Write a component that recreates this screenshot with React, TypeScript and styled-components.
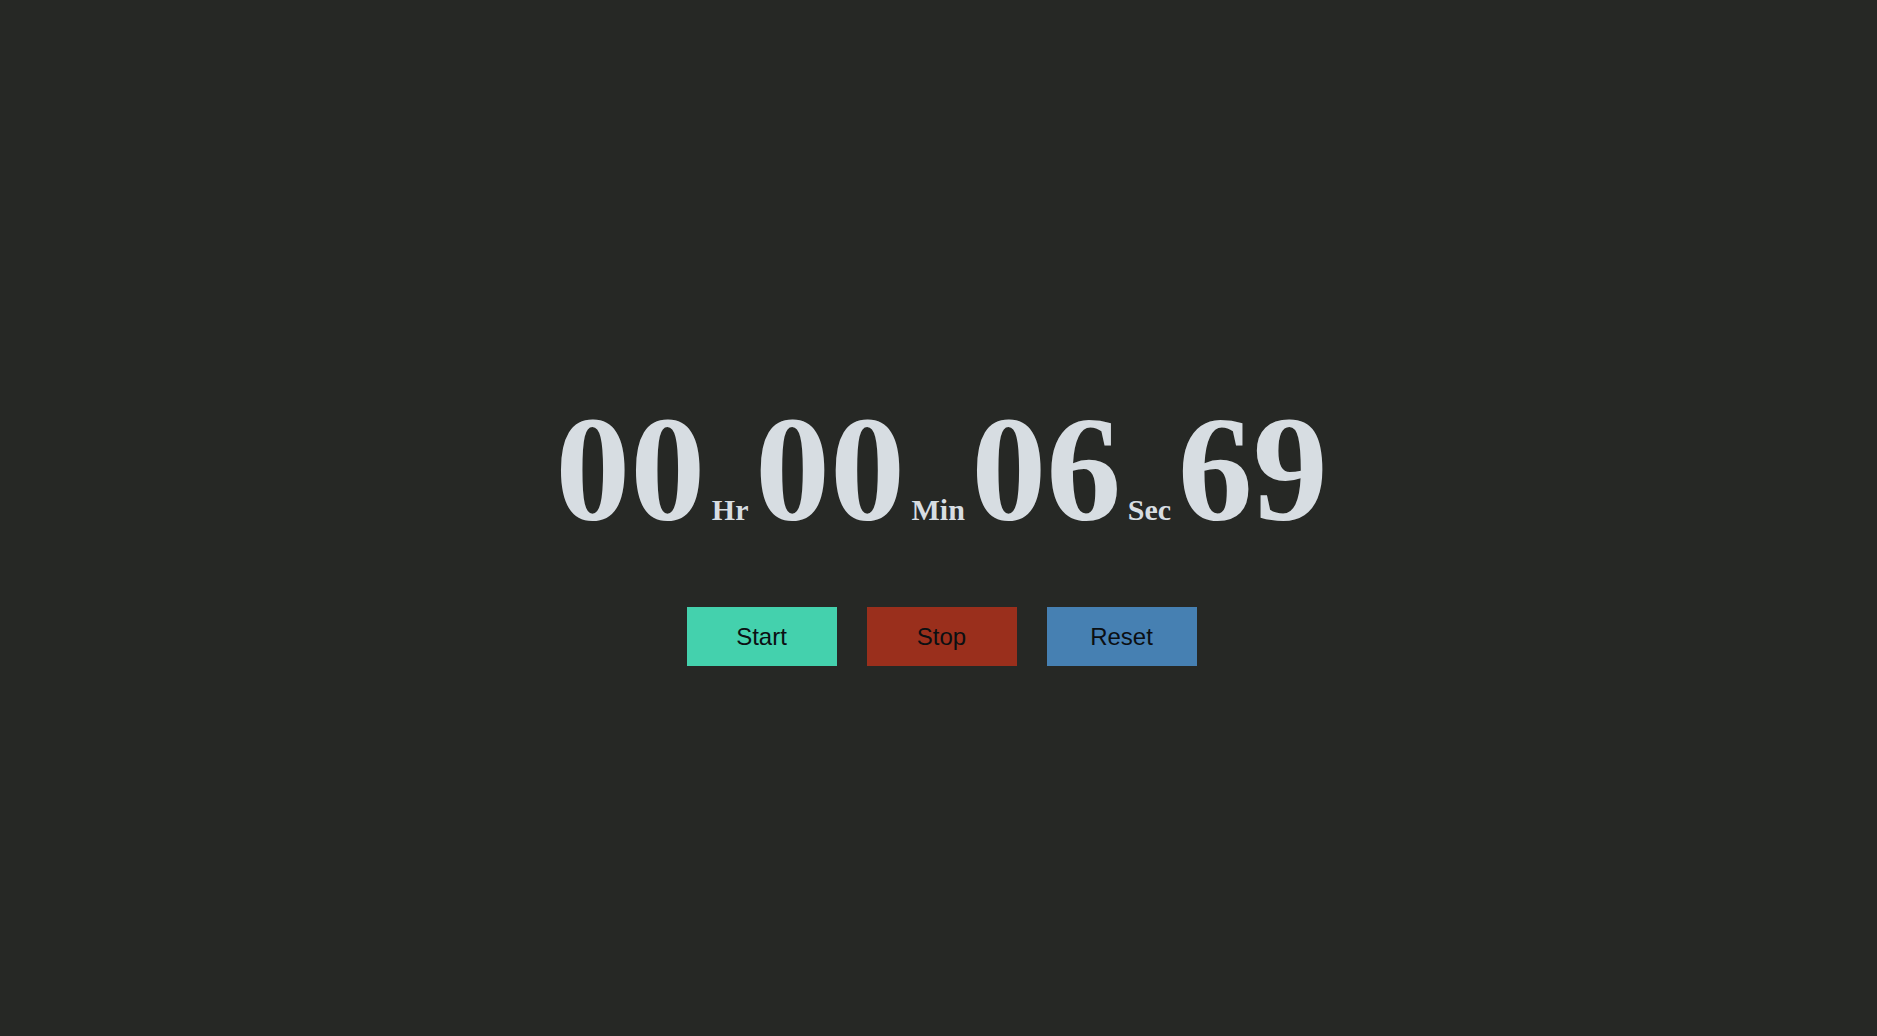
import React from "react";
import styled, { createGlobalStyle } from "styled-components";

const GlobalStyle = createGlobalStyle`
  html, body {
    margin: 0;
    padding: 0;
    background: #262825;
  }
  body {
    font-family: "Liberation Serif", "Times New Roman", serif;
  }
`;

const Page = styled.main`
  min-height: 100vh;
  box-sizing: border-box;
  display: flex;
  flex-direction: column;
  align-items: center;
  justify-content: center;
  padding: 13px 0 0 6px;
`;

const Clock = styled.div`
  display: flex;
  align-items: baseline;
  color: #d7dde2;
  font-family: "Liberation Serif", "Times New Roman", serif;
  font-weight: 700;
`;

const Digits = styled.span`
  font-size: 150px;
  line-height: normal;
`;

const Unit = styled.span`
  font-size: 30px;
  margin: 0 6.5px;
`;

const Controls = styled.div`
  display: flex;
  gap: 30px;
  margin-top: 52px;
`;

const Button = styled.button<{ $bg: string }>`
  width: 150px;
  height: 59px;
  border: none;
  border-radius: 0;
  padding: 0;
  background: ${(p) => p.$bg};
  color: #0b0f12;
  font-family: "Liberation Sans", Arial, sans-serif;
  font-size: 24px;
  cursor: pointer;
`;

export default function App() {
  return (
    <>
      <GlobalStyle />
      <Page>
        <Clock>
          <Digits>00</Digits>
          <Unit>Hr</Unit>
          <Digits>00</Digits>
          <Unit>Min</Unit>
          <Digits>06</Digits>
          <Unit>Sec</Unit>
          <Digits>69</Digits>
        </Clock>
        <Controls>
          <Button $bg="#44d1ad">Start</Button>
          <Button $bg="#9a2f1c">Stop</Button>
          <Button $bg="#4680b2">Reset</Button>
        </Controls>
      </Page>
    </>
  );
}
